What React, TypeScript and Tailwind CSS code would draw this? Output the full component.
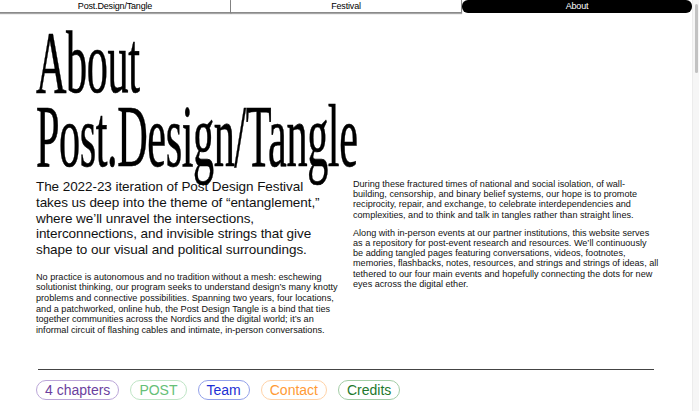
import React from 'react';

// ============================================================================
// Data
// ============================================================================

const tabs = [
  { label: 'Post.Design/Tangle', active: false },
  { label: 'Festival', active: false },
  { label: 'About', active: true },
];

const links = [
  { label: '4 chapters', cls: 'text-[#6b3f9e] border-[#bba6d8]' },
  { label: 'POST', cls: 'text-[#66c077] border-[#bfe5c6]' },
  { label: 'Team', cls: 'text-[#1c2fd4] border-[#93a1ea]' },
  { label: 'Contact', cls: 'text-[#ff9a35] border-[#ffd3a8]' },
  { label: 'Credits', cls: 'text-[#22782c] border-[#a3cda6]' },
];

const intro = [
  'No practice is autonomous and no tradition without a mesh: eschewing',
  'solutionist thinking, our program seeks to understand design’s many knotty',
  'problems and connective possibilities. Spanning two years, four locations,',
  'and a patchworked, online hub, the Post Design Tangle is a bind that ties',
  'together communities across the Nordics and the digital world; it’s an',
  'informal circuit of flashing cables and intimate, in-person conversations.',
];

const hope = [
  'During these fractured times of national and social isolation, of wall-',
  'building, censorship, and binary belief systems, our hope is to promote',
  'reciprocity, repair, and exchange, to celebrate interdependencies and',
  'complexities, and to think and talk in tangles rather than straight lines.',
];

const archive = [
  'Along with in-person events at our partner institutions, this website serves',
  'as a repository for post-event research and resources. We’ll continuously',
  'be adding tangled pages featuring conversations, videos, footnotes,',
  'memories, flashbacks, notes, resources, and strings and strings of ideas, all',
  'tethered to our four main events and hopefully connecting the dots for new',
  'eyes across the digital ether.',
];

const sans = "font-['Liberation_Sans',Arial,sans-serif]";

// ============================================================================
// Components
// ============================================================================

function TopNav() {
  return (
    <nav className="flex h-[13px]">
      {tabs.map((tab) => (
        <a
          key={tab.label}
          className={
            tab.active
              ? 'flex-1 flex items-center justify-center bg-black text-white rounded-[6px] text-[9px] tracking-[-0.02em] leading-none'
              : 'flex-1 flex items-center justify-center bg-white text-black border-r border-b border-[#8a8a8a] shadow-[0_1px_1px_rgba(0,0,0,0.35)] text-[9px] tracking-[-0.02em] leading-none'
          }
        >
          {tab.label}
        </a>
      ))}
    </nav>
  );
}

function Heading() {
  return (
    <h1 className="mt-[13px] font-['Liberation_Serif','Times_New_Roman',serif] text-[88px] leading-[74px] tracking-[-0.01em] text-black origin-left scale-x-[0.48] whitespace-nowrap [-webkit-text-stroke:0.6px_black]">
      <span className="block">About</span>
      <span className="block">Post.Design/Tangle</span>
    </h1>
  );
}

function Lines({ lines, className }: { lines: string[]; className: string }) {
  return (
    <p className={className}>
      {lines.map((line) => (
        <span key={line} className="block whitespace-nowrap">
          {line}
        </span>
      ))}
    </p>
  );
}

function Scrollbar() {
  return (
    <div className="w-[7px] shrink-0 bg-[#f6f6f6] border-l border-[#ececec] pt-[4px] flex justify-center">
      <div className="w-[3px] h-[69px] rounded-full bg-[#c2c2c2]" />
    </div>
  );
}

export default function App() {
  return (
    <div className={`flex h-[411px] w-[699px] overflow-hidden bg-white ${sans}`}>
      <div className="flex-1 min-w-0 flex flex-col">
        <TopNav />
        <main className="px-9">
          <Heading />

          <div className="mt-[5px] grid grid-cols-[300px_1fr] gap-x-[17px] text-[#111]">
            {/* Left column */}
            <div>
              <p className="text-[13.5px] leading-[15.75px] tracking-[-0.005em]">
                The 2022-23 iteration of Post Design Festival takes us deep into the theme of “entanglement,” where we’ll unravel the intersections, interconnections, and invisible strings that give shape to our visual and political surroundings.
              </p>
              <Lines lines={intro} className="mt-[14px] text-[9.15px] leading-[10.6px]" />
            </div>

            {/* Right column */}
            <div>
              <Lines lines={hope} className="text-[9.1px] leading-[10.2px]" />
              <Lines lines={archive} className="mt-[8px] text-[9.1px] leading-[10.2px]" />
            </div>
          </div>
        </main>

        <footer className="mt-auto px-9 pb-[11px]">
          <div className="mx-[2px] h-[1.5px] bg-[#444]" />
          <div className="mt-[10px] flex gap-[11px]">
            {links.map((link) => (
              <a
                key={link.label}
                className={`h-[20px] flex items-center px-2 rounded-full border text-[14px] leading-none ${link.cls}`}
              >
                {link.label}
              </a>
            ))}
          </div>
        </footer>
      </div>
      <Scrollbar />
    </div>
  );
}
